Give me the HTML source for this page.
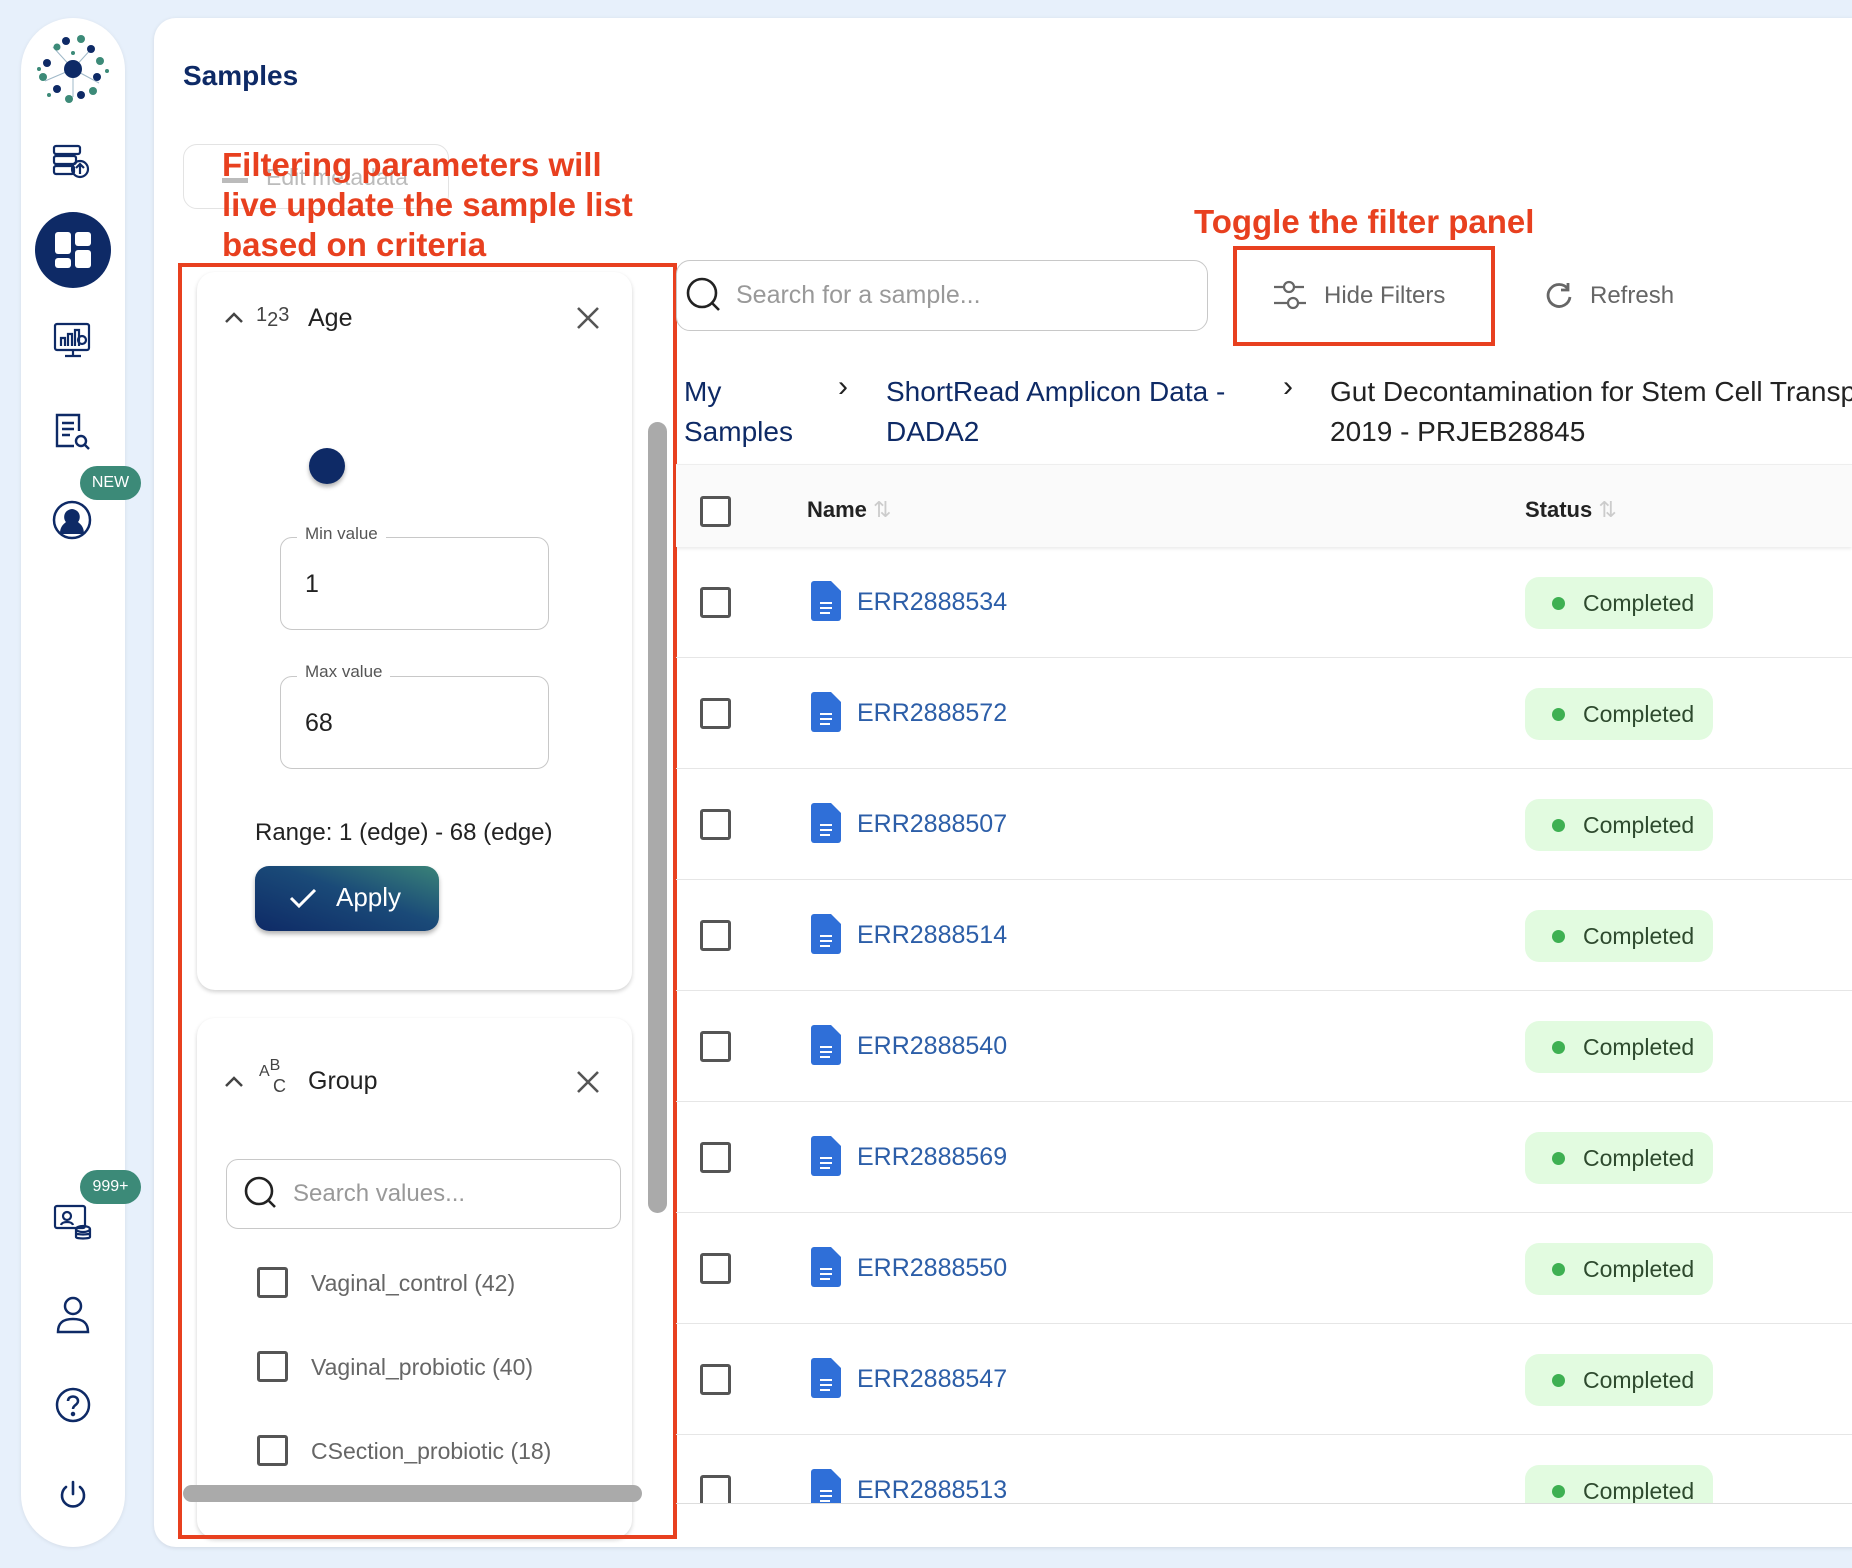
<!DOCTYPE html>
<html><head><meta charset="utf-8"><style>
*{box-sizing:border-box;margin:0;padding:0}
body{width:1852px;height:1568px;background:#e7f0fb;font-family:"Liberation Sans",sans-serif;position:relative;overflow:hidden}
.a{position:absolute}
.side{left:21px;top:18px;width:104px;height:1529px;background:#fff;border-radius:52px;box-shadow:0 1px 4px rgba(0,0,0,.08)}
.main{left:154px;top:18px;width:1720px;height:1529px;background:#fff;border-radius:22px;box-shadow:0 1px 4px rgba(0,0,0,.1)}
.red{color:#e8401f;font-weight:bold}
.card{background:#fff;border-radius:18px;box-shadow:0 2px 4px rgba(0,0,0,.18)}
.cb{width:31px;height:31px;border:3px solid #555;border-radius:3px;background:#fff}
.row{left:676px;width:1176px;height:111px;border-bottom:1px solid #e6e6e6}
.pill{left:849px;top:30px;width:188px;height:52px;background:#e2fbe0;border-radius:14px;color:#2e4a2e;font-size:23px;line-height:52px;padding-left:58px}
.pill:before{content:"";position:absolute;left:27px;top:20px;width:13px;height:13px;border-radius:50%;background:#3eb052}
.err{color:#2c5ea8;font-size:25px}
.field{border:1.5px solid #c8c8c8;border-radius:12px}
.lbl{background:#fff;padding:0 8px;color:#555;font-size:17px}
</style></head><body>
<div class="a side"></div>
<!-- logo -->
<svg class="a" style="left:33px;top:33px" width="80" height="72" viewBox="0 0 80 72">
<g stroke="#9fb8c8" stroke-width="1"><line x1="40" y1="36" x2="20" y2="14"/><line x1="40" y1="36" x2="60" y2="14"/><line x1="40" y1="36" x2="12" y2="48"/><line x1="40" y1="36" x2="66" y2="50"/><line x1="40" y1="36" x2="40" y2="64"/></g>
<circle cx="40" cy="36" r="9" fill="#0e2a66"/>
<g fill="#0e2a66"><circle cx="33" cy="8" r="4"/><circle cx="58" cy="16" r="4"/><circle cx="14" cy="30" r="4"/><circle cx="64" cy="44" r="4"/><circle cx="24" cy="56" r="4"/><circle cx="48" cy="62" r="4"/></g>
<g fill="#3c8a78"><circle cx="48" cy="6" r="4"/><circle cx="24" cy="14" r="3.5"/><circle cx="67" cy="28" r="4"/><circle cx="10" cy="44" r="4"/><circle cx="36" cy="66" r="4"/><circle cx="60" cy="58" r="4"/></g>
<g fill="#3c8a78"><circle cx="6" cy="36" r="2"/><circle cx="74" cy="38" r="2"/><circle cx="16" cy="62" r="2"/><circle cx="40" cy="20" r="2"/></g>
</svg>
<!-- sidebar icons -->
<svg class="a" style="left:52px;top:144px" width="40" height="36" viewBox="0 0 40 36" fill="none" stroke="#0e2a66" stroke-width="2.2"><rect x="2" y="2" width="26" height="8" rx="2"/><rect x="2" y="12" width="22" height="8" rx="2"/><rect x="2" y="22" width="20" height="8" rx="2"/><circle cx="28" cy="25" r="8"/><path d="M28 30v-10M24 24l4-4 4 4"/></svg>
<div class="a" style="left:35px;top:212px;width:76px;height:76px;border-radius:50%;background:#0e2a66"></div>
<div class="a" style="left:55px;top:232px;width:16px;height:22px;background:#fff;border-radius:3px"></div>
<div class="a" style="left:75px;top:232px;width:16px;height:14px;background:#fff;border-radius:3px"></div>
<div class="a" style="left:55px;top:258px;width:16px;height:10px;background:#fff;border-radius:3px"></div>
<div class="a" style="left:75px;top:250px;width:16px;height:18px;background:#fff;border-radius:3px"></div>
<svg class="a" style="left:53px;top:322px" width="40" height="38" viewBox="0 0 40 38" fill="none" stroke="#0e2a66" stroke-width="2.2"><rect x="2" y="2" width="34" height="26" rx="2"/><path d="M8 24v-8h4v8M15 24v-12h4v12M22 24v-16h4v16M12 34h16M20 28v6"/><circle cx="29" cy="18" r="4"/></svg>
<svg class="a" style="left:54px;top:412px" width="38" height="40" viewBox="0 0 38 40" fill="none" stroke="#0e2a66" stroke-width="2.4"><path d="M20 34H3V3h22v16"/><path d="M8 11h12M8 17h12M8 23h8"/><circle cx="27" cy="29" r="5"/><path d="M31 33l4 4"/></svg>
<div class="a" style="left:80px;top:466px;width:61px;height:34px;background:#3c8a78;border-radius:17px;color:#fff;font-size:16px;text-align:center;line-height:34px">NEW</div>
<svg class="a" style="left:52px;top:500px" width="40" height="40" viewBox="0 0 40 40"><circle cx="20" cy="20" r="18" fill="#fff" stroke="#0e2a66" stroke-width="2.5"/><path d="M8 34c0-8 4-10 6-12-3-3-3-12 6-13 9 1 9 10 6 13 2 2 6 4 6 12z" fill="#0e2a66"/></svg>
<div class="a" style="left:80px;top:1170px;width:61px;height:34px;background:#3c8a78;border-radius:17px;color:#fff;font-size:16px;text-align:center;line-height:34px">999+</div>
<svg class="a" style="left:53px;top:1203px" width="40" height="40" viewBox="0 0 40 40" fill="none" stroke="#0e2a66" stroke-width="2.2"><rect x="2" y="3" width="30" height="22" rx="2"/><circle cx="14" cy="13" r="4"/><path d="M8 22c1-4 11-4 12 0"/><ellipse cx="30" cy="26" rx="7" ry="3"/><path d="M23 26v8c0 2 14 2 14 0v-8M23 30c0 2 14 2 14 0"/></svg>
<svg class="a" style="left:55px;top:1295px" width="36" height="40" viewBox="0 0 36 40" fill="none" stroke="#0e2a66" stroke-width="2.5"><circle cx="18" cy="11" r="8"/><path d="M3 37c0-10 6-13 15-13s15 3 15 13z"/></svg>
<svg class="a" style="left:54px;top:1386px" width="38" height="38" viewBox="0 0 38 38" fill="none" stroke="#0e2a66" stroke-width="2.5"><circle cx="19" cy="19" r="16"/><path d="M14 15c0-6 10-6 10 0 0 4-5 4-5 8"/><circle cx="19" cy="28" r="1" fill="#0e2a66"/></svg>
<svg class="a" style="left:57px;top:1479px" width="32" height="32" viewBox="0 0 32 32" fill="none" stroke="#0e2a66" stroke-width="2.6" stroke-linecap="round"><path d="M16 3v12M9 8a11 11 0 1 0 14 0"/></svg>

<div class="a main"></div>
<div class="a" style="left:183px;top:60px;font-size:28px;color:#0e2a66;font-weight:bold">Samples</div>
<div class="a" style="left:183px;top:144px;width:266px;height:65px;border:1.5px solid #e3e3e3;border-radius:14px"></div>
<div class="a" style="left:266px;top:164px;font-size:23px;color:#bbb">Edit metadata</div>
<div class="a" style="left:222px;top:178px;width:26px;height:5px;background:#bbb"></div>
<div class="a red" style="left:222px;top:145px;font-size:33px;line-height:40px">Filtering parameters will<br>live update the sample list<br>based on criteria</div>

<!-- Age card -->
<div class="a card" style="left:197px;top:272px;width:435px;height:718px"></div>
<svg class="a" style="left:224px;top:310px" width="20" height="14" viewBox="0 0 20 14" fill="none" stroke="#444" stroke-width="2.5"><path d="M2 12l8-8 8 8"/></svg>
<div class="a" style="left:256px;top:304px;font-size:20px;color:#444">1<span style="position:relative;top:5px">2</span>3</div>
<div class="a" style="left:308px;top:304px;font-size:25px;color:#222">Age</div>
<svg class="a" style="left:576px;top:306px" width="24" height="24" viewBox="0 0 24 24" stroke="#555" stroke-width="2.6"><path d="M2 2l20 20M22 2L2 22"/></svg>
<div class="a" style="left:309px;top:448px;width:36px;height:36px;border-radius:50%;background:#0e2a66;box-shadow:0 3px 4px rgba(0,0,0,.3)"></div>
<div class="a field" style="left:280px;top:537px;width:269px;height:93px"></div>
<div class="a lbl" style="left:297px;top:524px">Min value</div>
<div class="a" style="left:305px;top:570px;font-size:25px;color:#222">1</div>
<div class="a field" style="left:280px;top:676px;width:269px;height:93px"></div>
<div class="a lbl" style="left:297px;top:662px">Max value</div>
<div class="a" style="left:305px;top:709px;font-size:25px;color:#222">68</div>
<div class="a" style="left:255px;top:819px;font-size:24px;color:#222">Range: 1 (edge) - 68 (edge)</div>
<div class="a" style="left:255px;top:866px;width:184px;height:65px;border-radius:14px;background:linear-gradient(200deg,#3a8378,#1a4a78 45%,#0e2a66);box-shadow:0 3px 5px rgba(0,0,0,.3)"></div>
<svg class="a" style="left:289px;top:887px" width="28" height="22" viewBox="0 0 28 22" fill="none" stroke="#fff" stroke-width="3"><path d="M2 11l8 8L26 3"/></svg>
<div class="a" style="left:336px;top:882px;font-size:26px;color:#fff">Apply</div>

<!-- Group card -->
<div class="a card" style="left:197px;top:1018px;width:435px;height:520px"></div>
<svg class="a" style="left:224px;top:1074px" width="20" height="14" viewBox="0 0 20 14" fill="none" stroke="#444" stroke-width="2.5"><path d="M2 12l8-8 8 8"/></svg>
<div class="a" style="left:259px;top:1063px;font-size:16px;color:#444">A<span style="position:relative;top:-6px">B</span></div>
<div class="a" style="left:273px;top:1076px;font-size:18px;color:#444">C</div>
<div class="a" style="left:308px;top:1067px;font-size:25px;color:#222">Group</div>
<svg class="a" style="left:576px;top:1070px" width="24" height="24" viewBox="0 0 24 24" stroke="#555" stroke-width="2.6"><path d="M2 2l20 20M22 2L2 22"/></svg>
<div class="a field" style="left:226px;top:1159px;width:395px;height:70px"></div>
<svg class="a" style="left:243px;top:1175px" width="36" height="36" viewBox="0 0 36 36" fill="none" stroke="#222" stroke-width="2.6"><circle cx="16" cy="16" r="13"/><path d="M26 26l6 6"/></svg>
<div class="a" style="left:293px;top:1180px;font-size:24px;color:#999">Search values...</div>
<div class="a cb" style="left:257px;top:1267px"></div><div class="a" style="left:311px;top:1270px;font-size:23px;color:#666">Vaginal_control (42)</div>
<div class="a cb" style="left:257px;top:1351px"></div><div class="a" style="left:311px;top:1354px;font-size:23px;color:#666">Vaginal_probiotic (40)</div>
<div class="a cb" style="left:257px;top:1435px"></div><div class="a" style="left:311px;top:1438px;font-size:23px;color:#666">CSection_probiotic (18)</div>
<div class="a" style="left:183px;top:1485px;width:459px;height:17px;background:#aaa;border-radius:9px"></div>
<div class="a" style="left:648px;top:422px;width:19px;height:791px;background:#aaa;border-radius:10px"></div>
<div class="a" style="left:178px;top:263px;width:499px;height:1276px;border:4px solid #e8401f"></div>

<!-- toolbar -->
<div class="a field" style="left:676px;top:260px;width:532px;height:71px;border-radius:14px"></div>
<svg class="a" style="left:685px;top:276px" width="38" height="38" viewBox="0 0 38 38" fill="none" stroke="#222" stroke-width="2.6"><circle cx="17" cy="17" r="14"/><path d="M27 27l7 7"/></svg>
<div class="a" style="left:736px;top:281px;font-size:25px;color:#999">Search for a sample...</div>
<div class="a red" style="left:1194px;top:203px;font-size:33px">Toggle the filter panel</div>
<svg class="a" style="left:1272px;top:278px" width="36" height="34" viewBox="0 0 36 34" fill="none" stroke="#666" stroke-width="2.2"><path d="M2 9h10M22 9h10M2 25h14M26 25h8"/><circle cx="17" cy="9" r="5"/><circle cx="21" cy="25" r="5"/></svg>
<div class="a" style="left:1324px;top:282px;font-size:24px;color:#666">Hide Filters</div>
<div class="a" style="left:1233px;top:246px;width:262px;height:100px;border:4px solid #e8401f"></div>
<svg class="a" style="left:1545px;top:281px" width="28" height="28" viewBox="0 0 28 28" fill="none" stroke="#666" stroke-width="2.8"><path d="M23 8A11 11 0 1 0 25 16M23 2v7h-7"/></svg>
<div class="a" style="left:1590px;top:282px;font-size:24px;color:#666">Refresh</div>

<!-- breadcrumb -->
<div class="a" style="left:684px;top:372px;font-size:28px;line-height:40px;color:#0e2a66">My<br>Samples</div>
<div class="a" style="left:838px;top:370px;font-size:30px;color:#222">›</div>
<div class="a" style="left:886px;top:372px;font-size:28px;line-height:40px;color:#0e2a66">ShortRead Amplicon Data -<br>DADA2</div>
<div class="a" style="left:1283px;top:370px;font-size:30px;color:#222">›</div>
<div class="a" style="left:1330px;top:372px;font-size:28px;line-height:40px;color:#222;white-space:nowrap">Gut Decontamination for Stem Cell Transplant<br>2019 - PRJEB28845</div>

<!-- table -->
<div class="a" style="left:676px;top:464px;width:1176px;height:83px;background:#fafafa;border-top:1px solid #eee;box-shadow:0 2px 3px rgba(0,0,0,.08)"></div>
<div class="a cb" style="left:700px;top:496px"></div>
<div class="a" style="left:807px;top:497px;font-size:22px;font-weight:bold;color:#222">Name <span style="color:#ccc;font-weight:normal">⇅</span></div>
<div class="a" style="left:1525px;top:497px;font-size:22px;font-weight:bold;color:#222">Status <span style="color:#ccc;font-weight:normal">⇅</span></div>
<div class="a" style="left:676px;top:547px;width:1176px;height:956px;overflow:hidden">
<div style="position:relative">
<!-- rows generated -->
<div class="a row" style="left:0;top:0"><div class="a cb" style="left:24px;top:40px"></div><svg class="a" style="left:135px;top:34px" width="30" height="40" viewBox="0 0 30 40"><path d="M3 0h17l10 10v27a3 3 0 0 1-3 3H3a3 3 0 0 1-3-3V3a3 3 0 0 1 3-3z" fill="#2f6fd8"/><path d="M9 22h12M9 27h12M9 32h10" stroke="#fff" stroke-width="2"/></svg><div class="a err" style="left:181px;top:41px">ERR2888534</div><div class="a pill">Completed</div></div>
<div class="a row" style="left:0;top:111px"><div class="a cb" style="left:24px;top:40px"></div><svg class="a" style="left:135px;top:34px" width="30" height="40" viewBox="0 0 30 40"><path d="M3 0h17l10 10v27a3 3 0 0 1-3 3H3a3 3 0 0 1-3-3V3a3 3 0 0 1 3-3z" fill="#2f6fd8"/><path d="M9 22h12M9 27h12M9 32h10" stroke="#fff" stroke-width="2"/></svg><div class="a err" style="left:181px;top:41px">ERR2888572</div><div class="a pill">Completed</div></div>
<div class="a row" style="left:0;top:222px"><div class="a cb" style="left:24px;top:40px"></div><svg class="a" style="left:135px;top:34px" width="30" height="40" viewBox="0 0 30 40"><path d="M3 0h17l10 10v27a3 3 0 0 1-3 3H3a3 3 0 0 1-3-3V3a3 3 0 0 1 3-3z" fill="#2f6fd8"/><path d="M9 22h12M9 27h12M9 32h10" stroke="#fff" stroke-width="2"/></svg><div class="a err" style="left:181px;top:41px">ERR2888507</div><div class="a pill">Completed</div></div>
<div class="a row" style="left:0;top:333px"><div class="a cb" style="left:24px;top:40px"></div><svg class="a" style="left:135px;top:34px" width="30" height="40" viewBox="0 0 30 40"><path d="M3 0h17l10 10v27a3 3 0 0 1-3 3H3a3 3 0 0 1-3-3V3a3 3 0 0 1 3-3z" fill="#2f6fd8"/><path d="M9 22h12M9 27h12M9 32h10" stroke="#fff" stroke-width="2"/></svg><div class="a err" style="left:181px;top:41px">ERR2888514</div><div class="a pill">Completed</div></div>
<div class="a row" style="left:0;top:444px"><div class="a cb" style="left:24px;top:40px"></div><svg class="a" style="left:135px;top:34px" width="30" height="40" viewBox="0 0 30 40"><path d="M3 0h17l10 10v27a3 3 0 0 1-3 3H3a3 3 0 0 1-3-3V3a3 3 0 0 1 3-3z" fill="#2f6fd8"/><path d="M9 22h12M9 27h12M9 32h10" stroke="#fff" stroke-width="2"/></svg><div class="a err" style="left:181px;top:41px">ERR2888540</div><div class="a pill">Completed</div></div>
<div class="a row" style="left:0;top:555px"><div class="a cb" style="left:24px;top:40px"></div><svg class="a" style="left:135px;top:34px" width="30" height="40" viewBox="0 0 30 40"><path d="M3 0h17l10 10v27a3 3 0 0 1-3 3H3a3 3 0 0 1-3-3V3a3 3 0 0 1 3-3z" fill="#2f6fd8"/><path d="M9 22h12M9 27h12M9 32h10" stroke="#fff" stroke-width="2"/></svg><div class="a err" style="left:181px;top:41px">ERR2888569</div><div class="a pill">Completed</div></div>
<div class="a row" style="left:0;top:666px"><div class="a cb" style="left:24px;top:40px"></div><svg class="a" style="left:135px;top:34px" width="30" height="40" viewBox="0 0 30 40"><path d="M3 0h17l10 10v27a3 3 0 0 1-3 3H3a3 3 0 0 1-3-3V3a3 3 0 0 1 3-3z" fill="#2f6fd8"/><path d="M9 22h12M9 27h12M9 32h10" stroke="#fff" stroke-width="2"/></svg><div class="a err" style="left:181px;top:41px">ERR2888550</div><div class="a pill">Completed</div></div>
<div class="a row" style="left:0;top:777px"><div class="a cb" style="left:24px;top:40px"></div><svg class="a" style="left:135px;top:34px" width="30" height="40" viewBox="0 0 30 40"><path d="M3 0h17l10 10v27a3 3 0 0 1-3 3H3a3 3 0 0 1-3-3V3a3 3 0 0 1 3-3z" fill="#2f6fd8"/><path d="M9 22h12M9 27h12M9 32h10" stroke="#fff" stroke-width="2"/></svg><div class="a err" style="left:181px;top:41px">ERR2888547</div><div class="a pill">Completed</div></div>
<div class="a row" style="left:0;top:888px"><div class="a cb" style="left:24px;top:40px"></div><svg class="a" style="left:135px;top:34px" width="30" height="40" viewBox="0 0 30 40"><path d="M3 0h17l10 10v27a3 3 0 0 1-3 3H3a3 3 0 0 1-3-3V3a3 3 0 0 1 3-3z" fill="#2f6fd8"/><path d="M9 22h12M9 27h12M9 32h10" stroke="#fff" stroke-width="2"/></svg><div class="a err" style="left:181px;top:41px">ERR2888513</div><div class="a pill">Completed</div></div>
</div></div>
<div class="a" style="left:676px;top:1503px;width:1176px;height:1px;background:#ddd"></div>
</body></html>
